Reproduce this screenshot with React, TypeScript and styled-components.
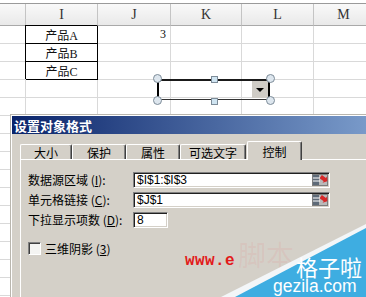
import React, { FC } from 'react';
import styled, { createGlobalStyle } from 'styled-components';

const GlobalStyle = createGlobalStyle`
  html, body {
    margin: 0;
    padding: 0;
    background: #fff;
  }
  body {
    font-family: "Liberation Sans", "Noto Sans CJK SC", sans-serif;
  }
`;

const Screen = styled.div`
  position: relative;
  width: 366px;
  height: 297px;
  overflow: hidden;
  background: #fff;
`;

/* ---------- spreadsheet ---------- */

const Sheet = styled.div`
  margin-top: 3px;
  border-top: 1px solid #9a9a9a;
  display: grid;
  grid-template-columns: 26px 72px 73px 71px 72px 60px;
  grid-template-rows: 22px;
  grid-auto-rows: 18px;
`;

const HeadCell = styled.div<{ $dark?: boolean }>`
  box-sizing: border-box;
  background: linear-gradient(#f9f9f9, #e9e9e9);
  border-right: 1px solid #c4c4c4;
  border-bottom: 1px solid ${(p) => (p.$dark ? '#202020' : '#a9a9a9')};
  display: flex;
  align-items: center;
  justify-content: center;
  font: 14px "Liberation Serif", serif;
  color: #333;
`;

const Cell = styled.div<{ $boxed?: boolean; $align?: string }>`
  box-sizing: border-box;
  border-right: 1px solid ${(p) => (p.$boxed ? '#000' : '#d9d9d9')};
  border-bottom: 1px solid ${(p) => (p.$boxed ? '#000' : '#d9d9d9')};
  box-shadow: ${(p) => (p.$boxed ? '-1px -1px 0 0 #000' : 'none')};
  display: flex;
  align-items: center;
  justify-content: ${(p) => p.$align || 'center'};
  padding: 0 4px;
  font: 12px "Liberation Serif", "Noto Sans CJK SC", serif;
  color: #111;
`;

const ComboControl = styled.div`
  position: absolute;
  left: 157px;
  top: 79px;
  width: 113px;
  height: 21px;
  box-sizing: border-box;
  border-top: 2px solid #1a1a1a;
  border-bottom: 1px solid #333;
  border-left: 2px solid #000;
  border-right: 2px solid #000;
  display: flex;
  justify-content: flex-end;
`;

const DropButton = styled.div`
  width: 16px;
  height: 17px;
  background: #cfccc6;
  display: flex;
  align-items: center;
  justify-content: center;
`;

const Arrow = styled.div`
  width: 0;
  height: 0;
  border-left: 4px solid transparent;
  border-right: 4px solid transparent;
  border-top: 4px solid #000;
`;

const Handle = styled.div<{ $x: number; $y: number; $round?: boolean }>`
  position: absolute;
  left: ${(p) => p.$x}px;
  top: ${(p) => p.$y}px;
  width: ${(p) => (p.$round ? 9 : 7)}px;
  height: ${(p) => (p.$round ? 9 : 7)}px;
  box-sizing: border-box;
  border: 1px solid #7d8c99;
  border-radius: ${(p) => (p.$round ? '50%' : '0')};
  background: ${(p) => (p.$round ? '#dde6ee' : '#cfe4f1')};
`;

/* ---------- dialog ---------- */

const Dialog = styled.div`
  position: absolute;
  left: 10px;
  top: 114px;
  width: 500px;
  height: 220px;
  padding: 1px;
  background: #d4d0c8;
  border: 1px solid #b9b6ae;
  box-shadow: inset 1px 1px 0 #fff;
`;

const TitleBar = styled.div`
  height: 18px;
  padding-left: 2px;
  display: flex;
  align-items: center;
  background: linear-gradient(90deg, #0a246a, #a6caf0);
  color: #fff;
  font: bold 13px "Noto Sans CJK SC", sans-serif;
`;

const TabStrip = styled.div`
  box-sizing: border-box;
  height: 25px;
  padding: 7px 0 0 8px;
  display: flex;
  align-items: flex-end;
`;

const Tab = styled.div<{ $w: number; $active?: boolean }>`
  position: relative;
  z-index: ${(p) => (p.$active ? 1 : 0)};
  box-sizing: border-box;
  width: ${(p) => p.$w}px;
  height: ${(p) => (p.$active ? 19 : 15)}px;
  margin-left: ${(p) => (p.$active ? 1 : 0)}px;
  margin-bottom: ${(p) => (p.$active ? -1 : 0)}px;
  background: #d4d0c8;
  border-top: 1px solid #fff;
  border-left: 1px solid #fff;
  border-right: 1px solid #404040;
  border-radius: 2px 2px 0 0;
  box-shadow: inset -1px 0 0 #808080;
  display: flex;
  align-items: center;
  justify-content: center;
  font: 12px "Noto Sans CJK SC", sans-serif;
  color: #000;
`;

const Panel = styled.div`
  margin-left: 8px;
  height: 200px;
  padding: 11px 0 0 7px;
  border-top: 1px solid #fff;
  border-left: 1px solid #fff;
`;

const FormGrid = styled.div`
  display: grid;
  grid-template-columns: 105px auto;
  row-gap: 3px;
  align-items: center;
`;

const Label = styled.div`
  font: 12px "Noto Sans CJK SC", sans-serif;
  color: #000;
  white-space: nowrap;
`;

const Field = styled.div<{ $w: number }>`
  box-sizing: border-box;
  width: ${(p) => p.$w}px;
  height: 16px;
  padding-left: 3px;
  background: #fff;
  border: 1px solid;
  border-color: #808080 #fff #fff #808080;
  box-shadow: inset 1px 1px 0 #202020, inset -1px -1px 0 #d4d0c8;
  display: flex;
  align-items: center;
  justify-content: space-between;
  font: 12px "Liberation Sans", sans-serif;
  color: #000;
`;

const RefButton = styled.span`
  display: flex;
  margin-right: 1px;
`;

const CheckRow = styled.div`
  margin-top: 12px;
  display: flex;
  align-items: center;
  gap: 4px;
`;

const CheckBox = styled.div`
  box-sizing: border-box;
  width: 13px;
  height: 13px;
  background: #f4f4f2;
  border: 1px solid;
  border-color: #808080 #fff #fff #808080;
  box-shadow: inset 1px 1px 0 #404040;
`;

/* ---------- watermarks ---------- */

const RedMark = styled.div`
  position: absolute;
  left: 185px;
  top: 252px;
  font: bold 16px "Liberation Mono", monospace;
  letter-spacing: 0.4px;
  color: #e21a1a;
`;

const PinkMark = styled.div`
  position: absolute;
  left: 238px;
  top: 240px;
  font: 28px "Noto Sans CJK SC", sans-serif;
  line-height: 1;
  color: rgba(235, 120, 120, 0.12);
`;

const Wedge = styled.svg`
  position: absolute;
  left: 0;
  top: 0;
`;

const BrandName = styled.div`
  position: absolute;
  left: 296px;
  top: 255px;
  font: 22px "Noto Sans CJK SC", sans-serif;
  line-height: 22px;
  color: #fff;
`;

const BrandUrl = styled.div`
  position: absolute;
  left: 273px;
  top: 278px;
  font: 17.5px "Liberation Sans", sans-serif;
  line-height: 1;
  color: #fff;
`;

const columns = ['', 'I', 'J', 'K', 'L', 'M'];
const rows: string[][] = [
  ['', '产品A', '3'],
  ['', '产品B'],
  ['', '产品C'],
];
while (rows.length < 15) rows.push([]);

const tabs = [
  { name: '大小', w: 52 },
  { name: '保护', w: 54 },
  { name: '属性', w: 54 },
  { name: '可选文字', w: 66 },
  { name: '控制', w: 55, active: true },
];

const RefIcon: FC = () => (
  <svg width="16" height="12" viewBox="0 0 16 12">
    <rect x="0" y="0" width="16" height="12" fill="#7d7d7d" />
    <rect x="1" y="1" width="14" height="10" fill="#b9b9b9" />
    <rect x="1" y="1" width="6" height="10" fill="#5e6a78" />
    <line x1="1" y1="4" x2="8" y2="4" stroke="#fff" />
    <line x1="1" y1="7" x2="8" y2="7" stroke="#fff" />
    <polygon points="8,3 13,3 13,1 16,5 13,9 13,7 8,7" fill="#d62828" transform="rotate(35 12 5)" />
  </svg>
);

const App: FC = () => (
  <Screen>
    <GlobalStyle />
    <Sheet>
      {columns.map((c, i) => (
        <HeadCell key={c + i} $dark={c === 'I'}>
          {c}
        </HeadCell>
      ))}
      {rows.map((r, ri) =>
        columns.map((_, ci) => (
          <Cell key={`${ri}-${ci}`} $boxed={ri < 3 && ci === 1} $align={ci === 2 ? 'flex-end' : 'center'}>
            {r[ci] || ''}
          </Cell>
        ))
      )}
    </Sheet>

    <ComboControl>
      <DropButton>
        <Arrow />
      </DropButton>
      <Handle $round $x={-6} $y={-7} />
      <Handle $round $x={107} $y={-7} />
      <Handle $round $x={-6} $y={15} />
      <Handle $round $x={107} $y={15} />
      <Handle $x={52} $y={-5} />
      <Handle $x={52} $y={17} />
    </ComboControl>

    <Dialog>
      <TitleBar>设置对象格式</TitleBar>
      <TabStrip>
        {tabs.map((t) => (
          <Tab key={t.name} $w={t.w} $active={t.active}>
            {t.name}
          </Tab>
        ))}
      </TabStrip>
      <Panel>
        <FormGrid>
          <Label>
            数据源区域 (<u>I</u>):
          </Label>
          <Field $w={197}>
            $I$1:$I$3
            <RefButton>
              <RefIcon />
            </RefButton>
          </Field>
          <Label>
            单元格链接 (<u>C</u>):
          </Label>
          <Field $w={197}>
            $J$1
            <RefButton>
              <RefIcon />
            </RefButton>
          </Field>
          <Label>
            下拉显示项数 (<u>D</u>):
          </Label>
          <Field $w={35}>8</Field>
        </FormGrid>
        <CheckRow>
          <CheckBox />
          <Label>
            三维阴影 (<u>3</u>)
          </Label>
        </CheckRow>
      </Panel>
    </Dialog>

    <RedMark>www.e</RedMark>
    <PinkMark>脚本</PinkMark>
    <Wedge width="366" height="297" viewBox="0 0 366 297">
      <polygon points="221,297 366,224 366,297" fill="#f3f6f8" />
      <polygon points="235,297 366,228 366,297" fill="#3eade1" />
    </Wedge>
    <BrandName>格子啦</BrandName>
    <BrandUrl>gezila.com</BrandUrl>
  </Screen>
);

export default App;
